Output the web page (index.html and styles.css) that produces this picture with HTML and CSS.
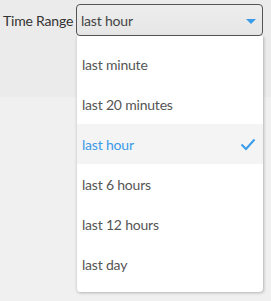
FILE: index.html
```html
<!DOCTYPE html>
<html>
<head>
	<meta charset="UTF-8">
	<title>Time Range</title>
	<link rel="stylesheet" href="styles.css">
</head>
<body>
<div class="toolbar">
	<div class="field">
		<span class="fieldlabel">Time Range</span>
		<div class="select">
			<span class="value">last hour</span>
			<span class="arrow"></span>
			<ul class="menu">
				<li>last minute</li>
				<li>last 20 minutes</li>
				<li class="selected">last hour
					<svg class="check" width="16" height="13" viewBox="0 0 16 13">
						<path d="M1.5 6.5 L6 11 L14.5 1.5" fill="none" stroke="#3a9be8" stroke-width="2"/>
					</svg>
				</li>
				<li>last 6 hours</li>
				<li>last 12 hours</li>
				<li>last day</li>
			</ul>
		</div>
	</div>
</div>
<div class="content"></div>
</body>
</html>
```

FILE: styles.css
```css
body {
	margin: 0;
	width: 271px;
	height: 301px;
	overflow: hidden;
	background-color: #f0f0f0;
	font-family: Lato, "Noto Sans", sans-serif;
	font-size: 14px;
	letter-spacing: -0.2px;
}
.toolbar {
	height: 97px;
	background-color: #ebebeb;
	box-sizing: border-box;
	padding: 4px 8px 0 3px;
}
.field {
	display: flex;
	align-items: center;
	gap: 5px;
}
.fieldlabel {
	color: #333;
	width: 68px;
	white-space: nowrap;
}
.select {
	position: relative;
	flex: 1;
	height: 32px;
	box-sizing: border-box;
	border: 1px solid #555;
	border-radius: 4px;
	background: linear-gradient(#ededed, #e6e6e6);
	display: flex;
	align-items: center;
	padding: 0 4px;
	color: #444;
}
.value {
	flex: 1;
}
.arrow {
	width: 0;
	height: 0;
	border-left: 5px solid transparent;
	border-right: 5px solid transparent;
	border-top: 5px solid #3a9be8;
	margin-right: 2px;
	margin-top: 2px;
}
.menu {
	position: absolute;
	left: -1px;
	right: -1px;
	top: 31px;
	margin: 0;
	padding: 8px 0;
	list-style: none;
	background-color: #fff;
	border-left: 1px solid #ddd;
	border-radius: 0 0 4px 4px;
	box-shadow: 1px 1px 3px rgba(0, 0, 0, .25);
}
.menu li {
	height: 40px;
	display: flex;
	align-items: center;
	padding: 0 7px 0 5px;
	color: #555;
}
.menu li.selected {
	background-color: #f4f4f4;
	color: #3a9be8;
	justify-content: space-between;
}
```
